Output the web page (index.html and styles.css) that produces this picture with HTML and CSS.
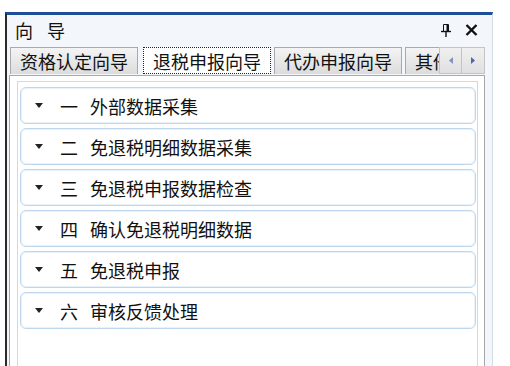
FILE: index.html
```html
<!DOCTYPE html>
<html lang="zh-CN">
<head>
  <meta charset="UTF-8">
  <title>向导</title>
  <link rel="stylesheet" href="styles.css">
</head>
<body>
<div class="panel">
  <div class="panel__head">
    <span class="panel__title">向 导</span>
    <span class="panel__tools">
      <svg class="panel__icon" viewBox="0 0 10 13" width="10" height="13">
        <path d="M2.5 0.5H7.5V7.5H2.5Z" fill="none" stroke="#111" />
        <path d="M6.5 1V7" stroke="#111" stroke-width="2" />
        <path d="M0 7.5H10" stroke="#111" stroke-width="1.4" />
        <path d="M5 8V13" stroke="#111" stroke-width="1.4" />
      </svg>
      <svg class="panel__icon" viewBox="0 0 13 12" width="13" height="12">
        <path d="M1.5 1L11.5 11M11.5 1L1.5 11" stroke="#111" stroke-width="2.4" />
      </svg>
    </span>
  </div>

  <div class="tabbar">
    <div class="tabbar__strip">
      <div class="tab">资格认定向导</div>
      <div class="tab tab--active">退税申报向导</div>
      <div class="tab">代办申报向导</div>
      <div class="tab">其他向导</div>
    </div>
    <div class="tabbar__nav">
      <span class="tabbar__btn">
        <svg viewBox="0 0 4 7" width="4" height="7"><path d="M4 0V7L0 3.5Z" fill="#7d95bd" /></svg>
      </span>
      <span class="tabbar__btn">
        <svg viewBox="0 0 4 7" width="4" height="7"><path d="M0 0V7L4 3.5Z" fill="#4a6aa4" /></svg>
      </span>
    </div>
  </div>

  <div class="page">
    <div class="page__frame">
      <div class="group"><span class="group__arrow"></span><span class="group__num">一</span><span>外部数据采集</span></div>
      <div class="group"><span class="group__arrow"></span><span class="group__num">二</span><span>免退税明细数据采集</span></div>
      <div class="group"><span class="group__arrow"></span><span class="group__num">三</span><span>免退税申报数据检查</span></div>
      <div class="group"><span class="group__arrow"></span><span class="group__num">四</span><span>确认免退税明细数据</span></div>
      <div class="group"><span class="group__arrow"></span><span class="group__num">五</span><span>免退税申报</span></div>
      <div class="group"><span class="group__arrow"></span><span class="group__num">六</span><span>审核反馈处理</span></div>
    </div>
  </div>
</div>
</body>
</html>
```

FILE: styles.css
```css
* {
  margin: 0;
  padding: 0;
  box-sizing: border-box;
}

:root {
  --color-ink: #111;
  --color-title-bar: #1d4f98;
  --color-head-bg: #f3f7fc;
  --color-tab-border: #a9a9a9;
  --color-frame: #c6dcf0;
  --color-group: #bed7ee;
}

body {
  height: 366px;
  overflow: hidden;
  padding: 12px 0 0 5px;
  background: #fff;
  color: var(--color-ink);
  font-family: "Noto Sans CJK SC", "Noto Sans", sans-serif;
}

.panel {
  width: 488px;
  height: 354px;
  display: flex;
  flex-direction: column;
  border-top: 3px solid var(--color-title-bar);
  border-left: 2px solid #2a2a2a;
  border-right: 1px solid #d2dde8;
  background: var(--color-head-bg);
}

.panel__head {
  height: 30px;
  display: flex;
  align-items: center;
  justify-content: space-between;
  padding: 0 14px 0 8px;
}

.panel__title {
  font-size: 18px;
  line-height: 1;
  word-spacing: 10px;
}

.panel__tools {
  display: flex;
  align-items: center;
  gap: 14px;
}

.panel__icon {
  display: block;
}

.tabbar {
  height: 30px;
  display: flex;
  align-items: flex-end;
  padding: 0 7px 1px 2px;
}

.tabbar__strip {
  flex: 1;
  display: flex;
  align-items: flex-end;
  gap: 3px;
  padding-left: 1px;
  overflow: hidden;
}

.tab {
  flex: none;
  height: 27px;
  padding: 0 9px;
  font-size: 18px;
  line-height: 26px;
  white-space: nowrap;
  background: linear-gradient(#f4f4f4, #dcdcdc);
  border: 1px solid var(--color-tab-border);
  border-bottom: none;
}

.tab--active {
  margin-left: 2px;
  background: #fff;
  border: 1px dotted #222;
}

.tabbar__nav {
  display: flex;
  height: 27px;
}

.tabbar__btn {
  width: 23px;
  display: flex;
  align-items: center;
  justify-content: center;
  background: linear-gradient(#f0f0f0, #e0e0e0);
  border: 1px solid #c4c4c4;
}

.tabbar__btn + .tabbar__btn {
  border-left: none;
}

.page {
  flex: 1;
  margin: 0 7px 0 2px;
  padding: 5px 6px 0 7px;
  background: #fff;
  border: 1px solid #a8a8a8;
  border-bottom: none;
}

.page__frame {
  height: 100%;
  padding: 5px 1px 0 2px;
  border: 1px solid var(--color-frame);
  border-bottom: none;
}

.group {
  height: 37px;
  margin-bottom: 4px;
  display: flex;
  align-items: center;
  padding-left: 14px;
  font-size: 18px;
  border: 1px solid var(--color-group);
  border-radius: 6px;
  box-shadow: inset 0 0 0 1px #e8f2fb;
}

.group__arrow {
  width: 0;
  height: 0;
  border-left: 4px solid transparent;
  border-right: 4px solid transparent;
  border-top: 5px solid #222;
  margin-right: 17px;
}

.group__num {
  margin-right: 12px;
}
```
